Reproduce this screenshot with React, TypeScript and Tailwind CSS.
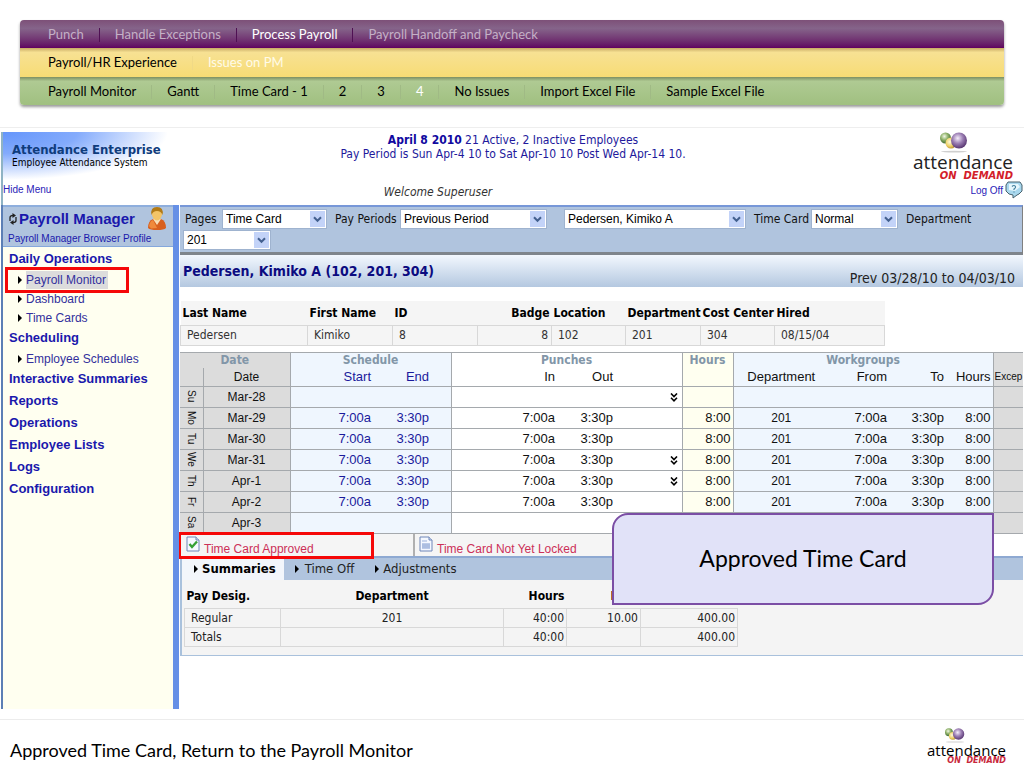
import React from "react";
import clsx from "clsx";

const phases = ["Punch", "Handle Exceptions", "Process Payroll", "Payroll Handoff and Paycheck"];
const experiences = ["Payroll/HR Experience", "Issues on PM"];
const screens = [
  "Payroll Monitor",
  "Gantt",
  "Time Card - 1",
  "2",
  "3",
  "4",
  "No Issues",
  "Import Excel File",
  "Sample Excel File",
];

const menu = [
  { title: "Daily Operations", items: ["Payroll Monitor", "Dashboard", "Time Cards"] },
  { title: "Scheduling", items: ["Employee Schedules"] },
  { title: "Interactive Summaries", items: [] },
  { title: "Reports", items: [] },
  { title: "Operations", items: [] },
  { title: "Employee Lists", items: [] },
  { title: "Logs", items: [] },
  { title: "Configuration", items: [] },
];

const days = [
  { day: "Su", date: "Mar-28", worked: false, more: true },
  { day: "Mo", date: "Mar-29", worked: true, more: false },
  { day: "Tu", date: "Mar-30", worked: true, more: false },
  { day: "We", date: "Mar-31", worked: true, more: true },
  { day: "Th", date: "Apr-1", worked: true, more: true },
  { day: "Fr", date: "Apr-2", worked: true, more: false },
  { day: "Sa", date: "Apr-3", worked: false, more: false },
];

type NavRowProps = {
  items: string[];
  active: string;
  className: string;
  itemClass: string;
  activeClass: string;
  dividerClass: string;
};

const NavRow = ({ items, active, className, itemClass, activeClass, dividerClass }: NavRowProps) => (
  <div className={clsx("flex items-center pl-[13px] text-[13px]", className)}>
    {items.map((item, i) => (
      <React.Fragment key={item}>
        {i > 0 && <span className={clsx("h-3.5 w-px", dividerClass)} />}
        <a href="#" className={clsx("px-[15px]", item === active ? activeClass : itemClass)}>
          {item}
        </a>
      </React.Fragment>
    ))}
  </div>
);

const Balls = ({ id, className }: { id: string; className: string }) => (
  <svg viewBox="0 0 30 21" className={className} aria-hidden="true">
    <defs>
      <radialGradient id={id + "g"} cx="40%" cy="35%" r="65%">
        <stop offset="0" stopColor="#f2f8e6" />
        <stop offset="0.5" stopColor="#8fb26a" />
        <stop offset="1" stopColor="#3f6b34" />
      </radialGradient>
      <radialGradient id={id + "y"} cx="40%" cy="40%" r="65%">
        <stop offset="0" stopColor="#fffbe0" />
        <stop offset="0.6" stopColor="#eed268" />
        <stop offset="1" stopColor="#b98f2c" />
      </radialGradient>
      <radialGradient id={id + "p"} cx="42%" cy="36%" r="65%">
        <stop offset="0" stopColor="#f6eefb" />
        <stop offset="0.5" stopColor="#9c7fb4" />
        <stop offset="1" stopColor="#573570" />
      </radialGradient>
    </defs>
    <ellipse cx="15" cy="19.6" rx="13" ry="0.8" fill="#cfcfcf" />
    <circle cx="6.5" cy="6" r="5.5" fill={`url(#${id}g)`} />
    <circle cx="12" cy="11" r="5.5" fill={`url(#${id}y)`} />
    <circle cx="20" cy="8.5" r="8" fill={`url(#${id}p)`} />
  </svg>
);

const SelectBox = ({ label, value, className }: { label: string; value: string; className: string }) => (
  <div className={clsx("relative h-5", className)}>
    <select
      aria-label={label}
      defaultValue={value}
      className="h-5 w-full appearance-none border border-[#9fb3cf] bg-white pl-[3px] font-['Liberation_Sans',sans-serif] text-[12px] leading-4 text-black"
    >
      <option>{value}</option>
    </select>
    <span className="pointer-events-none absolute top-0.5 right-0.5 flex h-4 w-[15px] items-center justify-center bg-[#c3d3f8]">
      <svg viewBox="0 0 9 7" className="h-[7px] w-[9px]">
        <path d="M1 1.2l3.5 3.6L8 1.2" fill="none" stroke="#43608f" strokeWidth="2" />
      </svg>
    </span>
  </div>
);

const Arrow = () => (
  <svg viewBox="0 0 4 8" className="h-2 w-1 shrink-0" aria-hidden="true">
    <path d="M0 0l4 4-4 4z" fill="#000" />
  </svg>
);

const MoreArrows = () => (
  <svg viewBox="0 0 8 9" className="inline h-[9px] w-2" aria-hidden="true">
    <path d="M1 .5l3 3 3-3M1 4.8l3 3 3-3" fill="none" stroke="#000" strokeWidth="1.6" />
  </svg>
);

const PageIcon = ({ approved }: { approved?: boolean }) => (
  <svg viewBox="0 0 14 16" className="mb-1 h-4 w-3.5 shrink-0" aria-hidden="true">
    <path d="M1 1h9l3 3v11H1z" fill="#f4f8ff" stroke="#6f86b8" />
    <path d="M10 1v3h3" fill="#d5e0f3" stroke="#6f86b8" />
    {approved ? (
      <path d="M3.500 8l2.500 3L11 5.500" fill="none" stroke="#35a035" strokeWidth="2.400" />
    ) : (
      <>
        <path d="M3 7h8v6H3z" fill="#bccbe8" />
        <path d="M3 5h5M3 9h8M3 11h8" stroke="#9db2da" />
      </>
    )}
  </svg>
);

const Header = () => (
  <header className="grid h-[73px] grid-cols-[1fr_auto_1fr] border-l-2 border-[#8fb3c4] bg-[radial-gradient(ellipse_165px_48px_at_0_0,#6495fb_0%,#84abfc_45%,#ffffff00_100%)]">
    <div className="flex flex-col pt-2.5 pl-[9px]">
      <h1 className="font-['DejaVu_Sans_Condensed','DejaVu_Sans',sans-serif] text-[13px] leading-[15px] font-bold text-[#0f3c7c]">
        Attendance Enterprise
      </h1>
      <p className="text-[10px] leading-3 text-black">Employee Attendance System</p>
      <a href="#" className="-ml-[9px] pt-[13px] font-['Liberation_Sans',sans-serif] text-[10px] leading-4 text-[#2a22b8]">
        Hide Menu
      </a>
    </div>
    <div className="flex flex-col pt-px text-center text-[12px] leading-[14px] text-[#22199c]">
      <p>
        <b className="text-[#1008a0]">April 8 2010</b> 21 Active, 2 Inactive Employees
      </p>
      <p>Pay Period is Sun Apr-4 10 to Sat Apr-10 10 Post Wed Apr-14 10.</p>
      <p className="mt-6 pr-[150px] text-[#333] italic">Welcome Superuser</p>
    </div>
    <div className="flex flex-col items-end">
      <div className="flex flex-col items-end pr-2.5">
        <Balls id="top" className="mr-11 h-[21px] w-[30px]" />
        <span className="font-['Open_Sans',sans-serif] text-[19px] leading-[18px] text-[#222]">attendance</span>
        <span className="font-['DejaVu_Sans',sans-serif] text-[10px] leading-[10px] font-bold text-[#d3202a] italic">
          ON &nbsp;DEMAND
        </span>
      </div>
      <a href="#" className="flex items-end font-['Liberation_Sans',sans-serif] text-[10px] leading-4 text-[#2a22b8]">
        Log Off
        <svg viewBox="0 0 18 18" className="ml-0.5 h-[18px] w-[18px]" aria-hidden="true">
          <path d="M3 1h12l2 3v6l-3 3-2 1-4 3v-3l-4-1-3-3V4z" fill="#a9d8ee" stroke="#47616d" />
          <path d="M4 3h9l2 3-5 4-6-1z" fill="#e6f6fc" />
          <path d="M7 5.500q2-2 3.500 0 .5 1.500-1.500 2.500v1M9 10.500v1" fill="none" stroke="#46829f" strokeWidth="1.200" />
        </svg>
      </a>
    </div>
  </header>
);

const Sidebar = () => (
  <aside className="relative w-[178px] shrink-0 border-r-[6px] border-l-2 border-r-[#6690e6] border-l-[#5c7fb5] bg-[#fffff0] font-['Liberation_Sans',sans-serif] text-[#1a18ac]">
    <div className="flex h-[42px] flex-col border-t-2 border-b border-t-[#8eaedd] border-b-[#85a8dc] bg-[#b0c4de] pl-[5px]">
      <div className="flex h-[26px] items-center">
        <svg viewBox="0 0 10 12" className="h-3 w-2.5" aria-hidden="true">
          <path d="M2 8V4.500Q2 2.500 5 2.500M8 4v3.500q0 2-3 2" fill="none" stroke="#222" strokeWidth="1.300" />
          <path d="M4.500 0l3.500 2.500-3.500 2.500zM5.500 7L2 9.500 5.500 12z" fill="#222" />
        </svg>
        <h2 className="pl-px text-[15px] font-bold">Payroll Manager</h2>
        <svg viewBox="0 0 18 24" className="mr-[7px] ml-auto h-6 w-[18px]" aria-hidden="true">
          <path d="M0 21q0-7 5-9h8q5 2 5 9-2 2-9 2t-9-2z" fill="#d8601f" />
          <path d="M5 12l4 6 4-6z" fill="#f7dfb8" />
          <path d="M1 19q1-5 4-6l4 8-6 .5z" fill="#f08a3c" />
          <ellipse cx="9" cy="7" rx="5" ry="6.500" fill="#f3c468" />
          <path d="M3.500 8Q2 0 9 0t5.500 8Q13 4 9 4T3.500 8z" fill="#b27a16" />
        </svg>
      </div>
      <a href="#" className="pt-px text-[10px] leading-[14px]">
        Payroll Manager Browser Profile
      </a>
    </div>
    <nav className="pt-px">
      {menu.map((section) => (
        <React.Fragment key={section.title}>
          <a href="#" className="flex h-[22px] items-center pl-1.5 text-[13px] font-bold">
            {section.title}
          </a>
          {section.items.map((item) => (
            <a key={item} href="#" className="flex h-[19px] items-center gap-1 pl-[15px] text-[12px] text-[#33309c]">
              <Arrow />
              <span className={clsx("pr-0.5", item === "Payroll Monitor" && "bg-[#dcdcdc]")}>{item}</span>
            </a>
          ))}
        </React.Fragment>
      ))}
    </nav>
    <div className="pointer-events-none absolute top-[62px] left-0.5 h-[26px] w-[124px] border-[3px] border-[#f50808]" />
  </aside>
);

const Toolbar = () => (
  <div className="flex h-[50px] flex-wrap content-start items-center gap-y-px border-t-2 border-r border-b-[3px] border-t-[#7797d8] border-r-[#808080] border-b-[#7f858c] bg-[#b0c4de] pt-0.5 pl-[3px] text-[12px] text-[#111]">
    <span className="w-[39px] pl-0.5">Pages</span>
    <SelectBox label="Pages" value="Time Card" className="w-[105px]" />
    <span className="w-[73px] pl-2">Pay Periods</span>
    <SelectBox label="Pay Periods" value="Previous Period" className="w-[147px]" />
    <SelectBox label="Employee" value="Pedersen, Kimiko A" className="ml-[17px] w-[182px]" />
    <span className="w-[65px] pl-2">Time Card</span>
    <SelectBox label="Time Card" value="Normal" className="w-[87px]" />
    <span className="pl-2">Department</span>
    <div className="basis-full">
      <SelectBox label="Department" value="201" className="w-[88px]" />
    </div>
  </div>
);

const EmployeeTable = () => (
  <table className="mt-3.5 w-[704px] table-fixed border-collapse text-left text-[12px] leading-4 text-[#333]">
    <colgroup>
      <col className="w-[127px]" />
      <col className="w-[85px]" />
      <col className="w-[85px]" />
      <col className="w-[74px]" />
      <col className="w-[74px]" />
      <col className="w-[75px]" />
      <col className="w-[74px]" />
      <col className="w-[110px]" />
    </colgroup>
    <thead>
      <tr className="h-6 bg-[#f5f5f5] whitespace-nowrap text-black">
        <th className="pl-0.5">Last Name</th>
        <th className="pl-0.5">First Name</th>
        <th className="pl-0.5">ID</th>
        <th className="pr-0.5 text-right">Badge</th>
        <th className="pl-0.5">Location</th>
        <th className="pl-0.5">Department</th>
        <th className="pl-0.5">Cost Center</th>
        <th className="pl-0.5">Hired</th>
      </tr>
    </thead>
    <tbody>
      <tr className="h-5 bg-[#f5f5f5] *:border *:border-[#d8d8d8]">
        <td className="pl-1.5">Pedersen</td>
        <td className="pl-1.5">Kimiko</td>
        <td className="pl-1.5">8</td>
        <td className="pr-[3px] text-right">8</td>
        <td className="pl-1.5">102</td>
        <td className="pl-1.5">201</td>
        <td className="pl-1.5">304</td>
        <td className="pl-1.5">08/15/04</td>
      </tr>
    </tbody>
  </table>
);

const TimeCardTable = () => (
  <table className="mt-1.5 w-full table-fixed border-collapse border-y border-[#a5a9ad] text-right font-['Liberation_Sans',sans-serif] text-[13px] leading-4 text-[#111]">
    <colgroup>
      <col className="w-[23px] bg-[#dcdcdc]" />
      <col className="w-[87px] bg-[#dcdcdc]" />
      <col className="w-[81px] bg-[#eff6fe]" />
      <col className="w-[58px] bg-[#eff6fe]" />
      <col className="w-[22px] bg-[#eff6fe]" />
      <col className="w-[104px]" />
      <col className="w-[58px]" />
      <col className="w-[69px]" />
      <col className="w-[51px] bg-[#fffff0]" />
      <col className="w-[96px] bg-[#eff6fe]" />
      <col className="w-[58px] bg-[#eff6fe]" />
      <col className="w-[57px] bg-[#eff6fe]" />
      <col className="w-[49px] bg-[#eff6fe]" />
      <col className="bg-[#dcdcdc]" />
    </colgroup>
    <thead>
      <tr className="h-4 text-center font-['DejaVu_Sans_Condensed','DejaVu_Sans',sans-serif] text-[12px] leading-[15px] text-[#8296a8]">
        <th colSpan={2}>Date</th>
        <th colSpan={3} className="border-l border-[#a5a9ad]">Schedule</th>
        <th colSpan={3} className="border-l border-[#a5a9ad]">Punches</th>
        <th className="border-l border-[#a5a9ad]">Hours</th>
        <th colSpan={4} className="border-l border-[#a5a9ad]">Workgroups</th>
        <th className="border-l border-[#a5a9ad]" />
      </tr>
      <tr className="h-[18px] *:font-normal">
        <th />
        <th className="border-l border-[#a5a9ad] text-center text-[12px]">Date</th>
        <th className="border-l border-[#a5a9ad] text-[#1a1a9c]">Start</th>
        <th className="text-[#1a1a9c]">End</th>
        <th />
        <th className="border-l border-[#a5a9ad]">In</th>
        <th>Out</th>
        <th />
        <th className="border-l border-[#a5a9ad]" />
        <th className="border-l border-[#a5a9ad] text-center">Department</th>
        <th>From</th>
        <th>To</th>
        <th className="pr-0.5">Hours</th>
        <th className="border-l border-[#a5a9ad] pl-px text-left text-[10px]">Excep</th>
      </tr>
    </thead>
    <tbody>
      {days.map((d) => (
        <tr key={d.day} className="h-[21px] border-t border-[#a5a9ad]">
          <td className="p-0">
            <div className="flex h-4 items-center justify-center">
              <span className="text-[10px] leading-3 [writing-mode:vertical-rl]">{d.day}</span>
            </div>
          </td>
          <td className="border-l border-[#a5a9ad] text-center text-[12px]">{d.date}</td>
          <td className="border-l border-[#a5a9ad] text-[#1a1a9c]">{d.worked && "7:00a"}</td>
          <td className="text-[#1a1a9c]">{d.worked && "3:30p"}</td>
          <td />
          <td className="border-l border-[#a5a9ad]">{d.worked && "7:00a"}</td>
          <td>{d.worked && "3:30p"}</td>
          <td className="pr-1 leading-none">{d.more && <MoreArrows />}</td>
          <td className="border-l border-[#a5a9ad] pr-0.5">{d.worked && "8:00"}</td>
          <td className="border-l border-[#a5a9ad] text-center text-[12px]">{d.worked && "201"}</td>
          <td>{d.worked && "7:00a"}</td>
          <td>{d.worked && "3:30p"}</td>
          <td className="pr-0.5">{d.worked && "8:00"}</td>
          <td className="border-l border-[#a5a9ad]" />
        </tr>
      ))}
    </tbody>
  </table>
);

const SummaryTable = () => (
  <table className="ml-0.5 w-[553px] table-fixed border-collapse text-right text-[12px] leading-4 text-[#222]">
    <colgroup>
      <col className="w-24" />
      <col className="w-[223px]" />
      <col className="w-[63px]" />
      <col className="w-[74px]" />
      <col className="w-[97px]" />
    </colgroup>
    <thead>
      <tr className="h-[29px] text-black">
        <th className="pt-1 pl-0.5 text-left">Pay Desig.</th>
        <th className="pt-1 text-center">Department</th>
        <th className="pt-1 pr-0.5">Hours</th>
        <th className="pt-1 pr-0.5">Rate</th>
        <th className="pt-1 pr-0.5">Amount</th>
      </tr>
    </thead>
    <tbody className="[&_td]:border [&_td]:border-[#d8d8d8]">
      <tr className="h-[19px]">
        <td className="pl-1.5 text-left">Regular</td>
        <td className="text-center">201</td>
        <td className="pr-0.5">40:00</td>
        <td className="pr-0.5">10.00</td>
        <td className="pr-0.5">400.00</td>
      </tr>
      <tr className="h-[19px]">
        <td className="pl-1.5 text-left">Totals</td>
        <td />
        <td className="pr-0.5">40:00</td>
        <td />
        <td className="pr-0.5">400.00</td>
      </tr>
    </tbody>
  </table>
);

const StatusAndSummary = () => (
  <section className="relative">
    <div className="mr-[60px] flex h-[22px] bg-[#f5f5f5] text-[12px] text-[#cc3058]">
      <p className="flex w-[233px] items-end gap-1 pl-1.5 font-['Liberation_Sans',sans-serif]">
        <PageIcon approved />
        <span className="leading-[14px]">Time Card Approved</span>
      </p>
      <p className="flex items-end gap-1 border-l-2 border-[#b0b0b0] pl-1 font-['Liberation_Sans',sans-serif]">
        <PageIcon />
        <span className="leading-[14px]">Time Card Not Yet Locked</span>
      </p>
    </div>
    <div className="border-b border-l-2 border-[#a9c1dc] bg-[#f4f4f4] pb-2">
      <div className="flex h-6 items-center border-t-2 border-[#8ea9d2] bg-[#b0c4de] text-[13px] text-[#222]">
        <button className="flex h-full items-center gap-1 bg-[#f2f6fb] pr-2 pl-3 font-bold text-black">
          <Arrow />
          Summaries
        </button>
        <button className="flex items-center gap-1.5 pl-[11px]">
          <Arrow />
          Time Off
        </button>
        <button className="flex items-center gap-1 pl-[21px]">
          <Arrow />
          Adjustments
        </button>
      </div>
      <SummaryTable />
    </div>
    <div className="pointer-events-none absolute -top-0.5 -left-0.5 h-[27px] w-[196px] border-[3px] border-[#f50808]" />
    <div className="absolute -top-[21px] right-[29px] flex h-[92px] w-[382px] items-center justify-center rounded-tl-2xl rounded-br-2xl border-2 border-[#7b4ea5] bg-[#e1e2f8] font-[Lato,sans-serif] text-[23px] text-black">
      Approved Time Card
    </div>
  </section>
);

export default function App() {
  return (
    <div className="flex min-h-screen flex-col bg-white font-['DejaVu_Sans_Condensed','DejaVu_Sans',sans-serif]">
      <nav className="mx-5 mt-5 mb-[22px] overflow-hidden rounded-[4px] font-[Lato,sans-serif] shadow-[0_2px_3px_#00000066]">
        <NavRow
          items={phases}
          active="Process Payroll"
          className="h-7 bg-linear-to-b from-[#7d5078] via-[#85648a] via-30% to-[#600060] pt-0.5"
          itemClass="text-[#c4b0c6]"
          activeClass="text-white"
          dividerClass="bg-[#4f1053]"
        />
        <NavRow
          items={experiences}
          active="Issues on PM"
          className="h-[29px] bg-linear-to-b from-[#c7ab64] via-[#f7e193] via-15% to-[#f7dc74]"
          itemClass="text-black"
          activeClass="text-[#fffbe8]"
          dividerClass="bg-[#f0d986]"
        />
        <NavRow
          items={screens}
          active="4"
          className="h-7 bg-linear-to-b from-[#7e8f62] via-[#afca93] via-15% to-[#a0c080] pt-0.5"
          itemClass="text-black"
          activeClass="text-white"
          dividerClass="bg-[#a0ba85]"
        />
      </nav>

      <div className="mb-2.5 border-t border-[#eeeeee] px-px pt-1">
        <Header />
        <div className="flex min-h-[504px]">
          <Sidebar />
          <main className="min-w-0 flex-1 overflow-hidden pl-px">
            <Toolbar />
            <div className="flex h-8 justify-between bg-linear-to-b from-[#f3f8fe] to-[#b4c8e0] pr-2 pl-[3px]">
              <h2 className="pt-2 text-[14px] leading-4 font-bold text-[#0b0b80]">Pedersen, Kimiko A (102, 201, 304)</h2>
              <p className="pt-[15px] text-[14px] leading-4 text-[#222]">Prev 03/28/10 to 04/03/10</p>
            </div>
            <EmployeeTable />
            <TimeCardTable />
            <StatusAndSummary />
          </main>
        </div>
      </div>

      <footer className="flex items-center justify-between border-t border-[#ececec] pt-2 pr-[18px] pl-2.5">
        <p className="pt-1.5 font-[Lato,sans-serif] text-[18px] leading-6 text-black">
          Approved Time Card, Return to the Payroll Monitor
        </p>
        <div className="flex flex-col items-end">
          <Balls id="foot" className="mr-10 h-[15px] w-[22px]" />
          <span className="font-['Open_Sans',sans-serif] text-[15px] leading-[14px] text-black">attendance</span>
          <span className="font-['DejaVu_Sans',sans-serif] text-[8px] leading-2 font-bold text-[#c8283c] italic">
            ON &nbsp;DEMAND
          </span>
        </div>
      </footer>
    </div>
  );
}
